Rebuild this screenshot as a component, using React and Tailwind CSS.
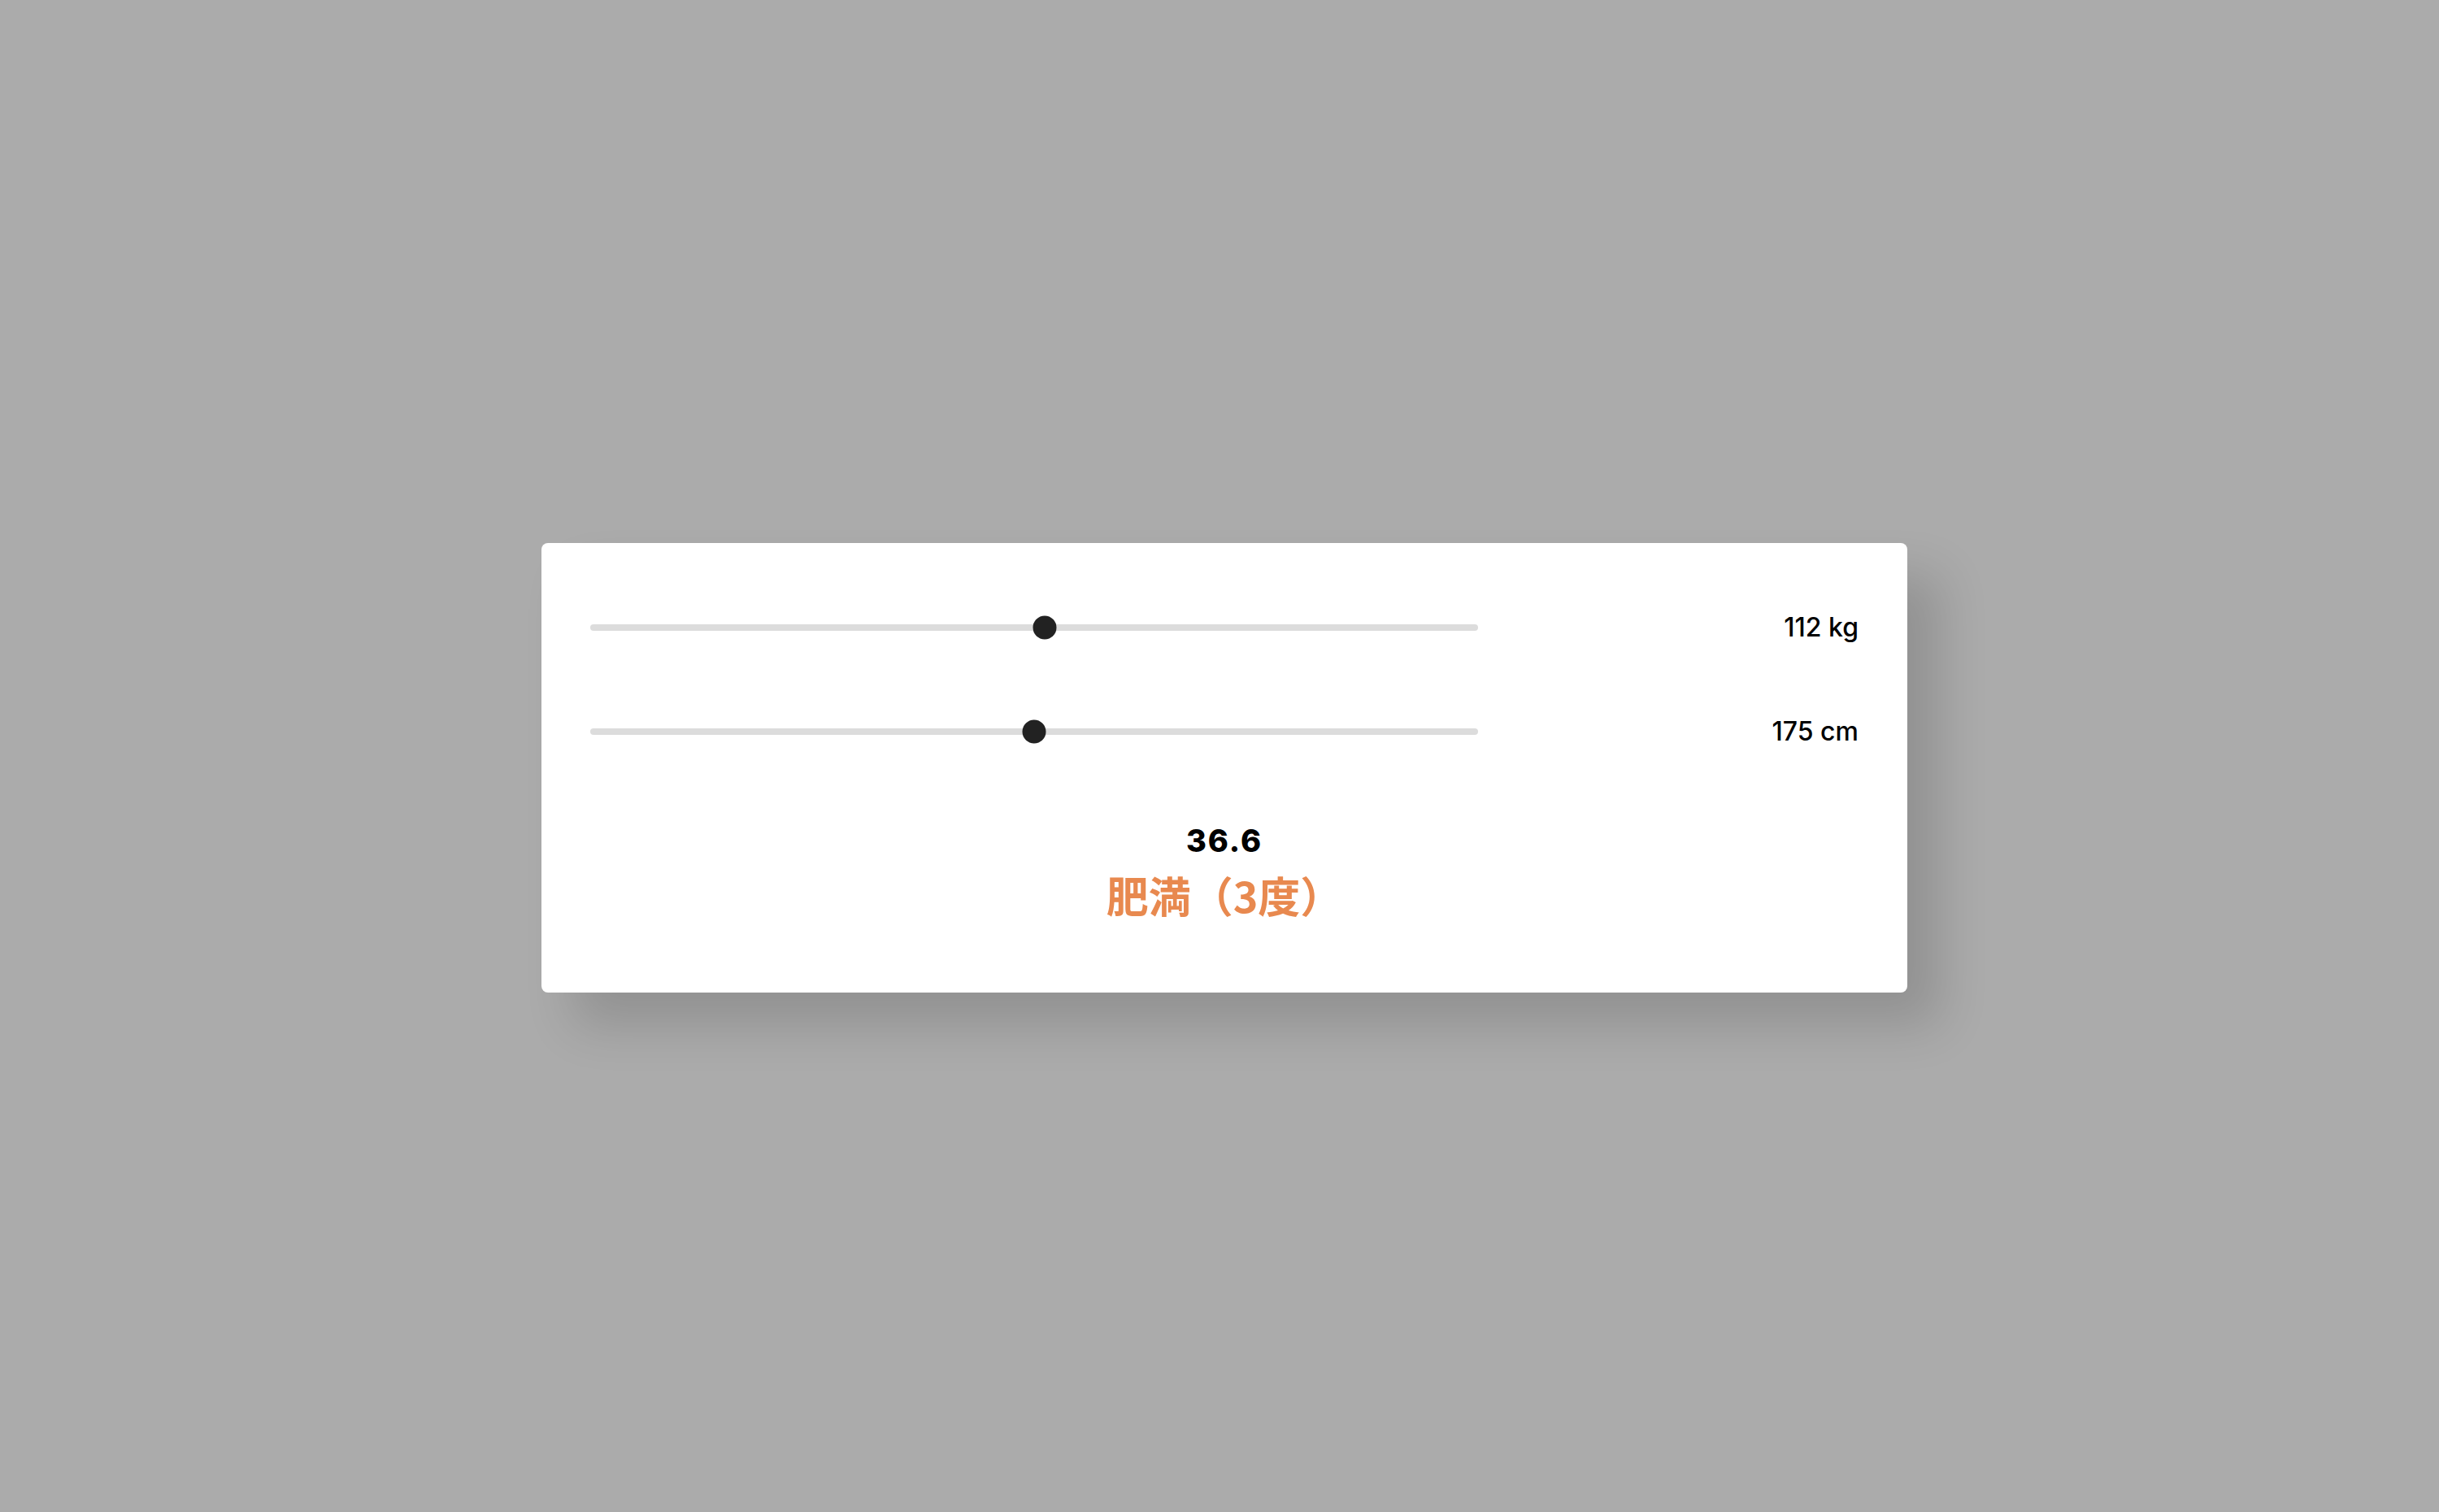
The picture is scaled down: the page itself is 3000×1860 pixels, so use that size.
import React, { useState } from "react";

// BMI categories (Japanese standard)
const getCategory = (bmi) => {
  if (bmi < 18.5) return "低体重";
  if (bmi < 25) return "普通体重";
  if (bmi < 30) return "肥満（1度）";
  if (bmi < 35) return "肥満（2度）";
  if (bmi < 40) return "肥満（3度）";
  return "肥満（4度）";
};

function Slider({ value, min, max }) {
  const pct = ((value - min) / (max - min)) * 100;
  return (
    <div className="relative w-[1092px] h-[8px] rounded-full bg-[#dcdcdc]" role="slider" aria-valuenow={value}>
      <div
        className="absolute top-1/2 w-[29px] h-[29px] -translate-x-1/2 -translate-y-1/2 rounded-full bg-[#222222]"
        style={{ left: `${pct}%` }}
      />
    </div>
  );
}

export default function App() {
  const [weight] = useState(112);
  const [height] = useState(175);

  const bmi = weight / Math.pow(height / 100, 2);

  return (
    <div className="min-h-screen bg-[#ababab] flex items-center justify-center pt-[28px] pl-[12px]">
      <div className="w-[1680px] bg-white rounded-lg shadow-[40px_40px_60px_rgba(0,0,0,0.15)] px-[60px] pt-[80px] pb-[94px] font-['Inter','Noto_Sans_CJK_JP',sans-serif]">
        <div className="flex items-center justify-between h-[48px]">
          <Slider value={weight} min={40.6} max={180} />
          <span className="text-[32px] font-medium text-black">{weight} kg</span>
        </div>
        <div className="flex items-center justify-between h-[48px] mt-[80px]">
          <Slider value={height} min={100} max={250} />
          <span className="text-[32px] font-medium text-black">{height} cm</span>
        </div>

        <div className="mt-[90px] flex flex-col items-center">
          <div className="text-[38px] leading-[40px] font-extrabold tracking-[0.05em] text-black">
            {bmi.toFixed(1)}
          </div>
          <div className="mt-[21px] text-[52px] leading-none font-bold text-[#e8894f] font-['Noto_Sans_CJK_JP',sans-serif] [text-spacing-trim:space-all]">
            {getCategory(bmi)}
          </div>
        </div>
      </div>
    </div>
  );
}
